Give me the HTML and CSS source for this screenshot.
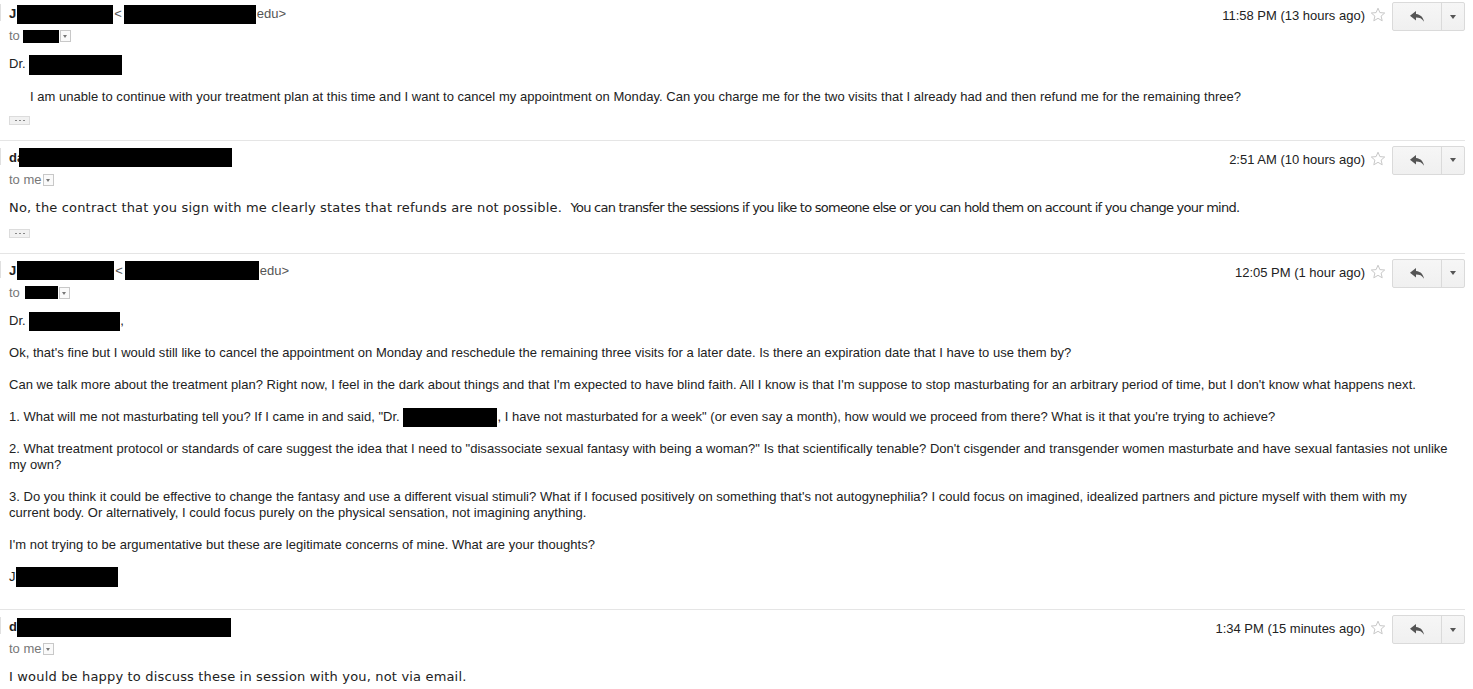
FILE: index.html
```html
<!DOCTYPE html>
<html>
<head>
    <link rel="stylesheet" href="styles.css">
</head>
<body>
    <div class="thread">

        <div class="msg first">
            <div class="head">
                <div class="who">
                    <div class="from"><b>J</b><span class="redact w96 ml1"></span><span class="addr">&lt;</span><span class="redact w132 ml2"></span><span class="addr">edu&gt;</span></div>
                    <div class="to">to<span class="redact w36 short ml3"></span><span class="dd"></span></div>
                </div>
                <div class="meta">
                    <span class="date">11:58 PM (13 hours ago)</span>
                    <svg class="star" width="16" height="16" viewBox="0 0 16 16"><path d="M8 1.2l1.9 4.4 4.8.4-3.6 3.1 1.1 4.7L8 11.3l-4.2 2.5 1.1-4.7L1.3 6l4.8-.4z" fill="none" stroke="#c8c8c8" stroke-width="1"/></svg>
                    <div class="btns">
                        <div class="reply"><svg width="14" height="11" viewBox="0 0 14 11"><path d="M6 0L0 4.8 6 9.6V6.6c3.6 0 6 .9 8 4.2-.6-4.2-3-7.2-8-7.8z" fill="#555"/></svg></div>
                        <div class="more"><span class="caret"></span></div>
                    </div>
                </div>
            </div>
            <div class="body">
                <p>Dr. <span class="redact w93 tall"></span></p>
                <p class="indent">I am unable to continue with your treatment plan at this time and I want to cancel my appointment on Monday. Can you charge me for the two visits that I already had and then refund me for the remaining three?</p>
            </div>
            <div class="dots"><i></i><i></i><i></i></div>
        </div>

        <div class="msg">
            <div class="head">
                <div class="who">
                    <div class="from"><b>da</b><span class="redact w213 over"></span></div>
                    <div class="to">to me<span class="dd ml9"></span></div>
                </div>
                <div class="meta">
                    <span class="date">2:51 AM (10 hours ago)</span>
                    <svg class="star" width="16" height="16" viewBox="0 0 16 16"><path d="M8 1.2l1.9 4.4 4.8.4-3.6 3.1 1.1 4.7L8 11.3l-4.2 2.5 1.1-4.7L1.3 6l4.8-.4z" fill="none" stroke="#c8c8c8" stroke-width="1"/></svg>
                    <div class="btns">
                        <div class="reply"><svg width="14" height="11" viewBox="0 0 14 11"><path d="M6 0L0 4.8 6 9.6V6.6c3.6 0 6 .9 8 4.2-.6-4.2-3-7.2-8-7.8z" fill="#555"/></svg></div>
                        <div class="more"><span class="caret"></span></div>
                    </div>
                </div>
            </div>
            <div class="body verdana">
                <p>No, the contract that you sign with me clearly states that refunds are not possible.&nbsp; <span class="narrow">You can transfer the sessions if you like to someone else or you can hold them on account if you change your mind.</span></p>
            </div>
            <div class="dots"><i></i><i></i><i></i></div>
        </div>

        <div class="msg long">
            <div class="head">
                <div class="who">
                    <div class="from"><b>J</b><span class="redact w97 ml1"></span><span class="addr">&lt;</span><span class="redact w134 ml2"></span><span class="addr">edu&gt;</span></div>
                    <div class="to">to<span class="redact w33 short ml5"></span><span class="dd"></span></div>
                </div>
                <div class="meta">
                    <span class="date">12:05 PM (1 hour ago)</span>
                    <svg class="star" width="16" height="16" viewBox="0 0 16 16"><path d="M8 1.2l1.9 4.4 4.8.4-3.6 3.1 1.1 4.7L8 11.3l-4.2 2.5 1.1-4.7L1.3 6l4.8-.4z" fill="none" stroke="#c8c8c8" stroke-width="1"/></svg>
                    <div class="btns">
                        <div class="reply"><svg width="14" height="11" viewBox="0 0 14 11"><path d="M6 0L0 4.8 6 9.6V6.6c3.6 0 6 .9 8 4.2-.6-4.2-3-7.2-8-7.8z" fill="#555"/></svg></div>
                        <div class="more"><span class="caret"></span></div>
                    </div>
                </div>
            </div>
            <div class="body">
                <p>Dr. <span class="redact w91"></span>,</p>
                <p>Ok, that's fine but I would still like to cancel the appointment on Monday and reschedule the remaining three visits for a later date. Is there an expiration date that I have to use them by?</p>
                <p>Can we talk more about the treatment plan? Right now, I feel in the dark about things and that I'm expected to have blind faith. All I know is that I'm suppose to stop masturbating for an arbitrary period of time, but I don't know what happens next.</p>
                <p>1. What will me not masturbating tell you? If I came in and said, "Dr. <span class="redact w94"></span>, I have not masturbated for a week" (or even say a month), how would we proceed from there? What is it that you're trying to achieve?</p>
                <p>2. What treatment protocol or standards of care suggest the idea that I need to "disassociate sexual fantasy with being a woman?" Is that scientifically tenable? Don't cisgender and transgender women masturbate and have sexual fantasies not unlike my own?</p>
                <p>3. Do you think it could be effective to change the fantasy and use a different visual stimuli? What if I focused positively on something that's not autogynephilia? I could focus on imagined, idealized partners and picture myself with them with my current body. Or alternatively, I could focus purely on the physical sensation, not imagining anything.</p>
                <p>I'm not trying to be argumentative but these are legitimate concerns of mine. What are your thoughts?</p>
                <p>J<span class="redact w102 tall"></span></p>
            </div>
        </div>

        <div class="msg last">
            <div class="head">
                <div class="who">
                    <div class="from"><b>d</b><span class="redact w214"></span></div>
                    <div class="to">to me<span class="dd ml9"></span></div>
                </div>
                <div class="meta">
                    <span class="date">1:34 PM (15 minutes ago)</span>
                    <svg class="star" width="16" height="16" viewBox="0 0 16 16"><path d="M8 1.2l1.9 4.4 4.8.4-3.6 3.1 1.1 4.7L8 11.3l-4.2 2.5 1.1-4.7L1.3 6l4.8-.4z" fill="none" stroke="#c8c8c8" stroke-width="1"/></svg>
                    <div class="btns">
                        <div class="reply"><svg width="14" height="11" viewBox="0 0 14 11"><path d="M6 0L0 4.8 6 9.6V6.6c3.6 0 6 .9 8 4.2-.6-4.2-3-7.2-8-7.8z" fill="#555"/></svg></div>
                        <div class="more"><span class="caret"></span></div>
                    </div>
                </div>
            </div>
            <div class="body verdana">
                <p>I would be happy to discuss these in session with you, not via email.</p>
            </div>
        </div>

    </div>
</body>
</html>
```

FILE: styles.css
```css
body {
    margin: 0;
    font-family: "Liberation Sans", Arial, sans-serif;
    font-size: 13px;
    color: #222;
    background: #fff;
    overflow: hidden;
}

.thread {
    width: 1465px;
}

.msg {
    padding: 9px 0 0 9px;
    border-bottom: 1px solid #e5e5e5;
}

.msg.first {
    padding-top: 6px;
}

.msg.long {
    padding-bottom: 24px;
}

.msg.last {
    border-bottom: none;
}

.head {
    display: flex;
    justify-content: space-between;
    align-items: flex-start;
    position: relative;
}

/* small grey tick on the left edge of each header */
.head::before {
    content: "";
    position: absolute;
    left: -9px;
    top: -2px;
    width: 1px;
    height: 17px;
    background: #e0e0e0;
}

.from,
.to {
    display: flex;
    align-items: center;
    height: 16px;
    line-height: 16px;
    white-space: nowrap;
}

.from b {
    font-weight: bold;
    color: #222;
}

.addr {
    color: #555;
    margin-left: 1px;
}

.to {
    margin-top: 6px;
    color: #777;
}

.redact {
    display: inline-block;
    height: 19px;
    background: #000;
    vertical-align: middle;
    margin: -2px 0;
}

.redact.short {
    height: 13px;
}

.redact.tall {
    height: 20px;
}

.redact.over {
    margin-left: -5px;
}

.w33 { width: 33px; }
.w36 { width: 36px; }
.w91 { width: 91px; }
.w93 { width: 93px; }
.w94 { width: 94px; }
.w96 { width: 96px; }
.w97 { width: 97px; }
.w102 { width: 102px; }
.w132 { width: 132px; }
.w134 { width: 134px; }
.w213 { width: 213px; }
.w214 { width: 214px; }

.ml1 { margin-left: 1px; }
.ml2 { margin-left: 2px; }
.ml3 { margin-left: 3px; }
.ml5 { margin-left: 5px; }
.ml9 { margin-left: 9px; }

.dd {
    display: inline-block;
    position: relative;
    width: 9px;
    height: 10px;
    margin-left: 1px;
    border: 1px solid #c8c8c8;
    background: #fafafa;
}

.dd::after {
    content: "";
    position: absolute;
    left: 2px;
    top: 4px;
    border-left: 2.5px solid transparent;
    border-right: 2.5px solid transparent;
    border-top: 3px solid #777;
}

.meta {
    display: flex;
    align-items: flex-start;
    margin-top: -4px;
}

.date {
    margin-top: 6px;
    line-height: 16px;
    margin-right: 5px;
    white-space: nowrap;
}

.star {
    margin-top: 5px;
    margin-right: 6px;
}

.btns {
    display: flex;
    height: 27px;
    border: 1px solid #dadada;
    border-radius: 2px;
    background: linear-gradient(#f6f6f6, #f0f0f0);
}

.reply {
    width: 48px;
    display: flex;
    align-items: center;
    justify-content: center;
}

.more {
    width: 22px;
    border-left: 1px solid #dadada;
    display: flex;
    align-items: center;
    justify-content: center;
}

.caret {
    border-left: 3.5px solid transparent;
    border-right: 3.5px solid transparent;
    border-top: 4px solid #555;
}

.body {
    margin-top: 12px;
    width: 1440px;
    letter-spacing: 0.025px;
}

.body p {
    margin: 0 0 16px;
    line-height: 16px;
}

.body p:last-child {
    margin-bottom: 0;
}

.body .indent {
    padding-left: 21px;
}

.verdana {
    font-family: "DejaVu Sans", Verdana, sans-serif;
    font-size: 13px;
    letter-spacing: 0.17px;
}

.verdana .narrow {
    letter-spacing: -0.75px;
}

.dots {
    display: flex;
    justify-content: center;
    align-items: center;
    gap: 2px;
    width: 19px;
    height: 7px;
    margin-top: 11px;
    margin-bottom: 15px;
    border: 1px solid #dcdcdc;
    background: #f1f1f1;
}

.dots i {
    width: 2px;
    height: 1px;
    background: #888;
}

.msg:nth-child(2) .dots {
    margin-top: 13px;
}
```
